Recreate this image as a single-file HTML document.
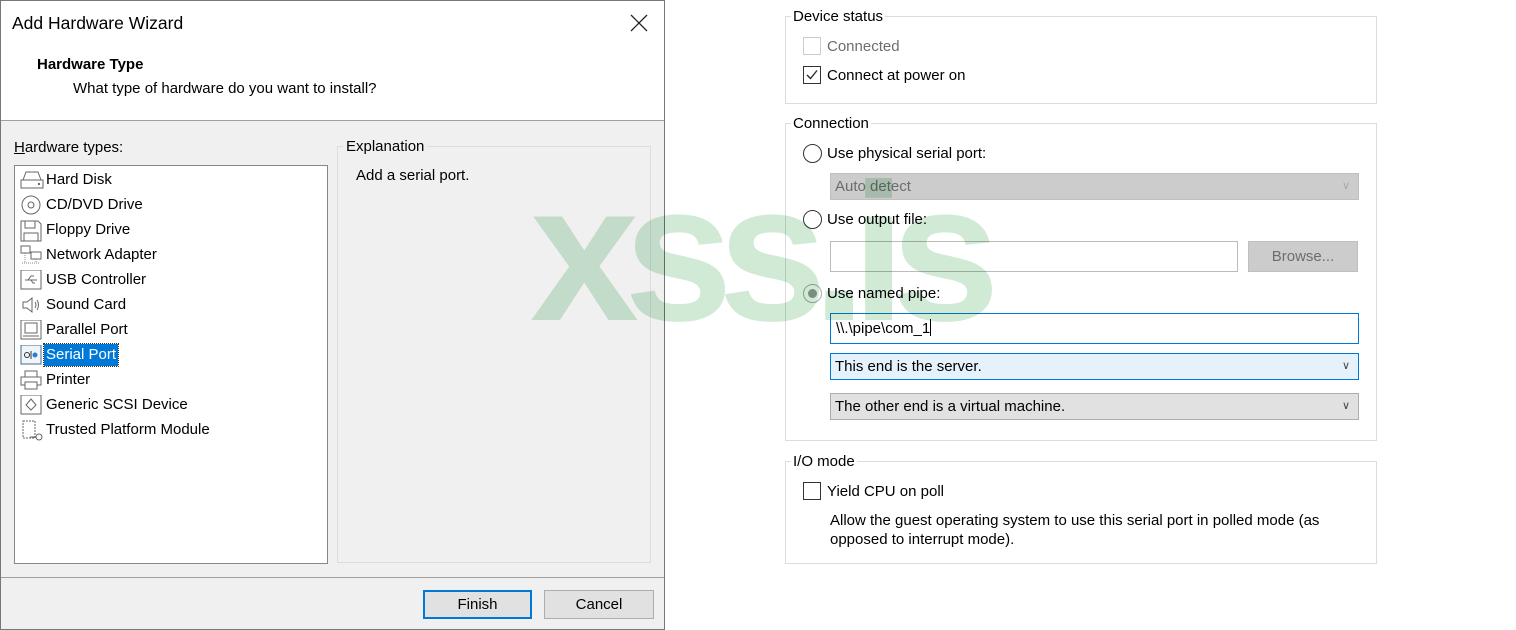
<!DOCTYPE html>
<html><head><meta charset="utf-8"><style>
*{margin:0;padding:0;box-sizing:border-box}
body{width:1516px;height:630px;background:#fff;position:relative;overflow:hidden;font-family:"Liberation Sans",sans-serif;font-size:15px;color:#000}
.a{position:absolute;white-space:nowrap}
.gb{position:absolute;border:1px solid #dcdcdc}
.gl{position:absolute;background:#fff;padding:0 2px;line-height:18px;white-space:nowrap}
.cb{position:absolute;width:18px;height:18px;border:1px solid #333;background:#fff}
.rb{position:absolute;width:19px;height:19px;border:1px solid #333;border-radius:50%;background:#fff}
.li{position:absolute;left:20px;height:24px;line-height:24px;white-space:nowrap}
.li svg{position:absolute;left:0;top:2px}
.li span{position:absolute;left:24px;top:1px;padding:0 2px;line-height:22px;white-space:nowrap}
</style></head><body>
<!-- left dialog -->
<div class="a" style="left:0;top:0;width:665px;height:630px;border:1px solid #777;background:#f0f0f0"></div>
<div class="a" style="left:1px;top:1px;width:663px;height:120px;background:#fff;border-bottom:1px solid #a0a0a0"></div>
<div class="a" style="left:12px;top:13px;font-size:17.5px">Add Hardware Wizard</div>
<svg class="a" style="left:630px;top:14px" width="18" height="18"><path d="M1 1L17 17M17 1L1 17" stroke="#222" stroke-width="1.3"/></svg>
<div class="a" style="left:37px;top:56px;font-weight:bold">Hardware Type</div>
<div class="a" style="left:73px;top:80px">What type of hardware do you want to install?</div>
<div class="a" style="left:14px;top:139px"><u>H</u>ardware types:</div>
<div class="a" style="left:14px;top:165px;width:314px;height:399px;background:#fff;border:1px solid #828790"></div>
<div class="a" style="left:337px;top:146px;width:314px;height:417px;border:1px solid #dcdcdc"></div>
<div class="a" style="left:343px;top:138px;background:#f0f0f0;padding:0 3px">Explanation</div>
<div class="a" style="left:356px;top:167px">Add a serial port.</div>
<div class="a" style="left:1px;top:577px;width:663px;height:1px;background:#a0a0a0"></div>
<div class="a" style="left:423px;top:590px;width:109px;height:29px;border:2px solid #0078d7;background:#e1e1e1;text-align:center;line-height:25px">Finish</div>
<div class="a" style="left:544px;top:590px;width:110px;height:29px;border:1px solid #adadad;background:#e1e1e1;text-align:center;line-height:27px">Cancel</div>

<div class="li" style="top:168px"><svg width="24" height="20"><rect x="1" y="10" width="22" height="8" fill="none" stroke="#666"/><path d="M3 10L6 2H18L21 10" fill="none" stroke="#666"/><rect x="18" y="13" width="2" height="2" fill="#666"/></svg><span>Hard Disk</span></div>
<div class="li" style="top:193px"><svg width="24" height="20"><circle cx="11" cy="10" r="9" fill="none" stroke="#666"/><circle cx="11" cy="10" r="3" fill="none" stroke="#666"/></svg><span>CD/DVD Drive</span></div>
<div class="li" style="top:218px"><svg width="24" height="22"><path d="M1 1H18L21 4V21H1Z" fill="none" stroke="#666"/><rect x="5" y="1" width="10" height="7" fill="none" stroke="#666"/><rect x="4" y="13" width="14" height="8" fill="none" stroke="#666"/></svg><span>Floppy Drive</span></div>
<div class="li" style="top:243px"><svg width="24" height="20"><rect x="1" y="1" width="9" height="7" fill="none" stroke="#666"/><rect x="11" y="7" width="10" height="7" fill="none" stroke="#666"/><path d="M16 14V18M2 18H20M5 8V18" fill="none" stroke="#888" stroke-dasharray="1 1"/></svg><span>Network Adapter</span></div>
<div class="li" style="top:268px"><svg width="24" height="20"><rect x="1" y="0" width="20" height="19" fill="none" stroke="#666"/><path d="M5 10H17M8 10L11 6H14M11 10L13 13H15" fill="none" stroke="#666"/></svg><span>USB Controller</span></div>
<div class="li" style="top:293px"><svg width="24" height="20"><path d="M3 7H7L12 3V17L7 13H3Z" fill="none" stroke="#666"/><path d="M15 7Q17 10 15 13M17 5Q20 10 17 15" fill="none" stroke="#666"/></svg><span>Sound Card</span></div>
<div class="li" style="top:318px"><svg width="24" height="20"><rect x="1" y="0" width="20" height="19" fill="none" stroke="#666"/><path d="M5 3H17V13H5ZM3 16H19" fill="none" stroke="#666"/></svg><span>Parallel Port</span></div>
<div class="li" style="top:343px"><svg width="24" height="20"><rect x="1" y="0" width="20" height="19" fill="#eef5fb" stroke="#4a6a8a"/><circle cx="7" cy="10" r="2.5" fill="none" stroke="#333"/><path d="M11 6V14" stroke="#333"/><circle cx="15" cy="10" r="2.5" fill="#2e7bd0"/></svg><span style="background:#0078d7;color:#fff;outline:1px dotted #333">Serial Port</span></div>
<div class="li" style="top:368px"><svg width="24" height="20"><rect x="5" y="1" width="12" height="6" fill="none" stroke="#666"/><rect x="1" y="7" width="20" height="8" fill="none" stroke="#666"/><rect x="5" y="12" width="12" height="7" fill="#fff" stroke="#666"/></svg><span>Printer</span></div>
<div class="li" style="top:393px"><svg width="24" height="20"><rect x="1" y="0" width="20" height="19" fill="none" stroke="#666"/><path d="M11 4L16 10L11 15L6 10Z" fill="none" stroke="#666"/></svg><span>Generic SCSI Device</span></div>
<div class="li" style="top:418px"><svg width="26" height="22"><rect x="3" y="1" width="12" height="17" fill="none" stroke="#666" stroke-dasharray="2 1"/><circle cx="19" cy="17" r="3" fill="none" stroke="#666"/><path d="M10 17H16" stroke="#666"/></svg><span>Trusted Platform Module</span></div>

<!-- right panel -->
<div class="gb" style="left:785px;top:16px;width:592px;height:88px"></div>
<div class="gl" style="left:791px;top:8px">Device status</div>
<div class="cb" style="left:803px;top:37px;border-color:#ccc"></div>
<div class="a" style="left:827px;top:38px;color:#6d6d6d">Connected</div>
<div class="cb" style="left:803px;top:66px"><svg width="16" height="16" style="position:absolute;left:0;top:0"><path d="M3 8L6.5 11.5L13 3.5" fill="none" stroke="#222" stroke-width="1.3"/></svg></div>
<div class="a" style="left:827px;top:67px">Connect at power on</div>

<div class="gb" style="left:785px;top:123px;width:592px;height:318px"></div>
<div class="gl" style="left:791px;top:115px">Connection</div>
<div class="rb" style="left:803px;top:144px"></div>
<div class="a" style="left:827px;top:145px">Use physical serial port:</div>
<div class="a" style="left:830px;top:173px;width:529px;height:27px;background:#cccccc;border:1px solid #bfbfbf;color:#6d6d6d;line-height:25px;padding-left:4px">Auto detect<span style="position:absolute;right:8px;color:#aaa;font-size:11px">&#8744;</span></div>
<div class="rb" style="left:803px;top:210px"></div>
<div class="a" style="left:827px;top:211px">Use output file:</div>
<div class="a" style="left:830px;top:241px;width:408px;height:31px;border:1px solid #bbb;background:#fff"></div>
<div class="a" style="left:1248px;top:241px;width:110px;height:31px;background:#cccccc;border:1px solid #bfbfbf;color:#6d6d6d;text-align:center;line-height:29px">Browse...</div>
<div class="rb" style="left:803px;top:284px;border-color:#aaa"><div style="position:absolute;left:4px;top:4px;width:9px;height:9px;border-radius:50%;background:#999"></div></div>
<div class="a" style="left:827px;top:285px">Use named pipe:</div>
<div class="a" style="left:830px;top:313px;width:529px;height:31px;border:1px solid #0078d7;background:#fff;line-height:29px;padding-left:5px">\\.\pipe\com_1<span style="display:inline-block;width:1px;height:17px;background:#000;vertical-align:-3px"></span></div>
<div class="a" style="left:830px;top:353px;width:529px;height:27px;border:1px solid #0078d7;background:#e5f1fb;line-height:25px;padding-left:4px">This end is the server.<span style="position:absolute;right:8px;font-size:11px;color:#444">&#8744;</span></div>
<div class="a" style="left:830px;top:393px;width:529px;height:27px;border:1px solid #adadad;background:#e1e1e1;line-height:25px;padding-left:4px">The other end is a virtual machine.<span style="position:absolute;right:8px;font-size:11px;color:#444">&#8744;</span></div>

<div class="gb" style="left:785px;top:461px;width:592px;height:103px"></div>
<div class="gl" style="left:791px;top:453px">I/O mode</div>
<div class="cb" style="left:803px;top:482px"></div>
<div class="a" style="left:827px;top:483px">Yield CPU on poll</div>
<div class="a" style="left:830px;top:511px;line-height:19px">Allow the guest operating system to use this serial port in polled mode (as<br>opposed to interrupt mode).</div>

<!-- watermark -->
<div class="a" style="left:530px;top:148px;font-size:196px;font-weight:bold;letter-spacing:-15px;color:#d0ead6;line-height:210px;mix-blend-mode:multiply">xss.is</div>
</body></html>
